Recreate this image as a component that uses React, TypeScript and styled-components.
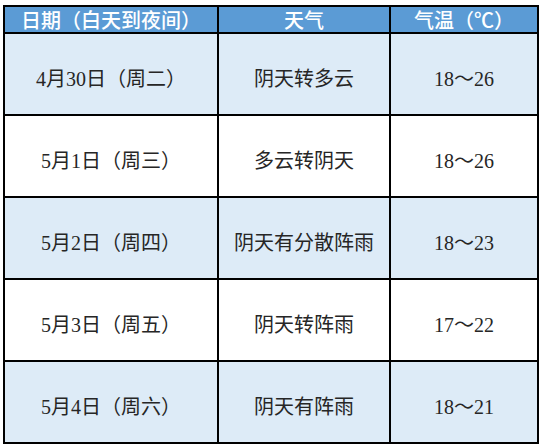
import React from "react"
import styled, { createGlobalStyle } from "styled-components"

const GlobalStyle = createGlobalStyle`
  body {
    margin: 0;
    background: #fff;
    font-family: "Liberation Serif", "Noto Sans CJK SC", serif;
  }
`

const Page = styled.div`
  padding: 5px 0 0 3px;
`

const Table = styled.div`
  display: grid;
  grid-template-columns: 212px 170px 146px;
  grid-template-rows: 25px repeat(5, 80px);
  gap: 2px;
  padding: 2px;
  background: #000;
  width: max-content;
`

const HeadCell = styled.div`
  background: #5b9bd5;
  color: #fff;
  font-family: "Noto Sans CJK SC", sans-serif;
  font-size: 20px;
  font-weight: 500;
  line-height: 1;
  display: flex;
  align-items: center;
  justify-content: center;
  white-space: nowrap;
  padding-top: 1px;
`

const Cell = styled.div<{ $shade: boolean }>`
  background: ${(p) => (p.$shade ? "#ddebf7" : "#fff")};
  color: #262626;
  font-family: "Liberation Serif", "Noto Sans CJK SC", serif;
  font-size: 20px;
  display: flex;
  align-items: center;
  justify-content: center;
  white-space: nowrap;
  padding-top: 6px;
`

const rows = [
  ["4月30日（周二）", "阴天转多云", "18～26"],
  ["5月1日（周三）", "多云转阴天", "18～26"],
  ["5月2日（周四）", "阴天有分散阵雨", "18～23"],
  ["5月3日（周五）", "阴天转阵雨", "17～22"],
  ["5月4日（周六）", "阴天有阵雨", "18～21"],
]

const App = (): JSX.Element => {
  return (
    <Page>
      <GlobalStyle />
      <Table>
        <HeadCell>日期（白天到夜间）</HeadCell>
        <HeadCell>天气</HeadCell>
        <HeadCell>气温（℃）</HeadCell>
        {rows.map((r, i) =>
          r.map((text, j) => (
            <Cell key={`${i}-${j}`} $shade={i % 2 === 0}>
              {text}
            </Cell>
          ))
        )}
      </Table>
    </Page>
  )
}

export default App
